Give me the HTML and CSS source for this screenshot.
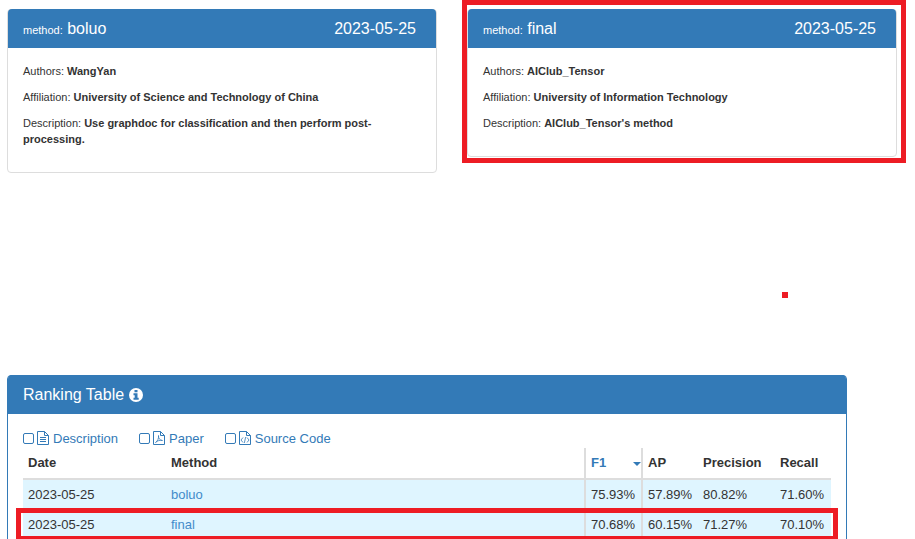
FILE: index.html
```html
<!DOCTYPE html>
<html lang="en">
<head>
<meta charset="utf-8">
<title>Ranking Table</title>
<link rel="stylesheet" href="styles.css">
</head>
<body>
<main>
  <section class="cards">
    <article class="card">
      <header class="card-head"><h2><small>method:</small> boluo</h2><time>2023-05-25</time></header>
      <div class="card-body">
        <p>Authors: <b>WangYan</b></p>
        <p>Affiliation: <b>University of Science and Technology of China</b></p>
        <p>Description: <b>Use graphdoc for classification and then perform post-processing.</b></p>
      </div>
    </article>
    <article class="card marked-card">
      <header class="card-head"><h2><small>method:</small> final</h2><time>2023-05-25</time></header>
      <div class="card-body">
        <p>Authors: <b>AIClub_Tensor</b></p>
        <p>Affiliation: <b>University of Information Technology</b></p>
        <p>Description: <b>AIClub_Tensor's method</b></p>
      </div>
    </article>
  </section>

  <div class="gap"><span class="dot"></span></div>

  <section class="card ranking">
    <header class="card-head">
      <h2>Ranking Table
        <svg class="info" viewBox="0 0 14 14" aria-hidden="true"><circle cx="7" cy="7" r="7" fill="#fff"/><path d="M5.500 2h3v2.200h-3zM4.500 5.200h4v4.500h1.200v2.100H4.500V9.700h1.200V7.300H4.500z" fill="#337ab7"/></svg>
      </h2>
    </header>
    <div class="ranking-body">
      <div class="filters">
        <label><input type="checkbox"><svg viewBox="0 0 12 14" aria-hidden="true"><path d="M.5.5h7l4 4v9H.5zM7.500.5v4h4M3 6.500h6M3 8.500h6M3 10.500h6"/></svg>Description</label>
        <label><input type="checkbox"><svg viewBox="0 0 12 14" aria-hidden="true"><path d="M.5.5h7l4 4v9H.5zM7.500.5v4h4"/><path class="thin" d="M2.500 11.500C4.500 10.500 6 7 5.500 4.500C5 7 7 9.500 9.500 9.500C7 9 4.500 9.500 2.500 11.500"/></svg>Paper</label>
        <label><input type="checkbox"><svg viewBox="0 0 12 14" aria-hidden="true"><path d="M.5.5h7l4 4v9H.5zM7.500.5v4h4"/><path class="thin" d="M4 6.500l-2 2.500 2 2.500M8 6.500l2 2.500-2 2.500M6.700 6l-1.400 6"/></svg>Source Code</label>
      </div>
      <table>
        <colgroup><col class="c-date"><col><col class="c-f1"><col class="c-ap"><col class="c-precision"><col class="c-recall"></colgroup>
        <thead>
          <tr><th>Date</th><th>Method</th><th class="ruled sorted">F1</th><th class="ruled">AP</th><th>Precision</th><th>Recall</th></tr>
        </thead>
        <tbody>
          <tr><td>2023-05-25</td><td><a href="#boluo">boluo</a></td><td class="ruled">75.93%</td><td class="ruled">57.89%</td><td>80.82%</td><td>71.60%</td></tr>
          <tr class="marked-row"><td>2023-05-25</td><td><a href="#final">final</a></td><td class="ruled">70.68%</td><td class="ruled">60.15%</td><td>71.27%</td><td>70.10%</td></tr>
        </tbody>
      </table>
    </div>
  </section>
</main>
</body>
</html>
```
FILE: styles.css
```css
* { box-sizing: border-box; }
html { overflow: hidden; }
body {
  margin: 0;
  background: #fff;
  color: #333;
  font-family: "Liberation Sans", Arial, sans-serif;
  font-size: 13px;
}
main { padding: 9px 18px 0 7px; }
.cards {
  display: grid;
  grid-template-columns: 1fr 1fr;
  align-items: start;
  gap: 30px;
}
.card {
  border: 1px solid #ddd;
  border-radius: 4px;
}
.card-head {
  display: flex;
  justify-content: space-between;
  align-items: center;
  margin-top: -1px;
  padding: 0 20px 0 15px;
  height: 39px;
  border-radius: 4px 4px 0 0;
  background: #337ab7;
  color: #fff;
  font-size: 16px;
}
h2 { margin: 0; font-size: 16px; font-weight: 400; }
small { font-size: 11px; }
.card-body { padding: 15px; font-size: 11px; line-height: 16px; }
.card-body p { margin: 0 0 10px; }

.marked-card, .marked-row { position: relative; }
.marked-card::after, .marked-row td:first-child::after {
  content: "";
  position: absolute;
  border: 5px solid #ed1c24;
  pointer-events: none;
}
.marked-card::after { inset: -10px -10px -7px -6px; }
.marked-row td:first-child::after { inset: -2px -7px -1px -7px; }

.gap {
  display: flex;
  justify-content: flex-end;
  align-items: center;
  height: 202px;
  padding: 42px 109px 0 0;
}
.dot { width: 6px; height: 6px; background: #ed1c24; }

.ranking { margin-right: 50px; border-color: #337ab7; }
.info { width: 14px; height: 14px; vertical-align: -2px; }
.ranking-body { padding: 14px 15px; }
.filters {
  display: flex;
  gap: 21px;
  height: 20px;
  align-items: center;
  color: #337ab7;
}
.filters label { display: flex; align-items: center; }
.filters input {
  appearance: none;
  width: 11px;
  height: 11px;
  margin: 0 3px 0 0;
  border: 1px solid #337ab7;
  border-radius: 2px;
}
.filters svg {
  width: 12px;
  height: 14px;
  margin-right: 4px;
  fill: none;
  stroke: #337ab7;
}
.filters .thin { stroke-width: .8; }

table {
  width: 100%;
  table-layout: fixed;
  border-collapse: separate;
  border-spacing: 0;
}
.c-date { width: 143px; }
.c-f1, .c-ap { width: 57px; }
.c-precision { width: 77px; }
.c-recall { width: 56px; }
th, td { height: 30px; padding: 0 5px 2px; text-align: left; white-space: nowrap; }
th { height: 32px; border-bottom: 2px solid #ddd; }
td { background: #dff5ff; }
.ruled { border-left: 2px solid #ddd; }
.sorted { position: relative; color: #337ab7; }
.sorted::after {
  content: "";
  position: absolute;
  right: 0;
  top: 14px;
  border: 4px solid transparent;
  border-top-color: #337ab7;
  border-bottom: 0;
}
a { color: #428bca; text-decoration: none; }
```
